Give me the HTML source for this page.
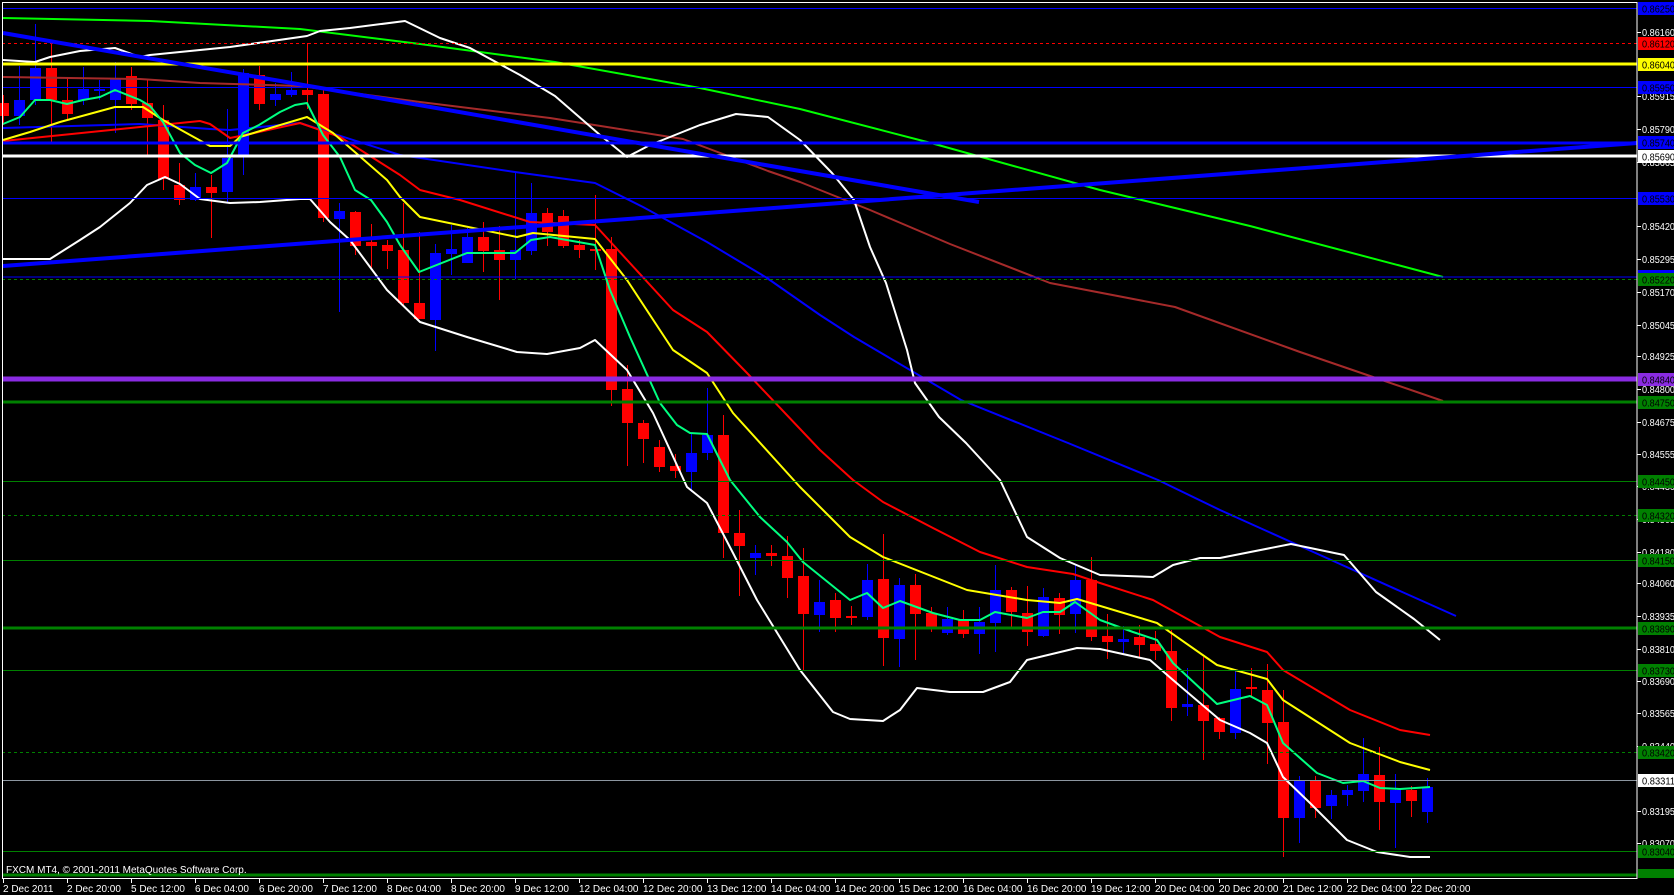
<!DOCTYPE html>
<html><head><meta charset="utf-8">
<style>
html,body{margin:0;padding:0;background:#000;width:1674px;height:895px;overflow:hidden}
svg{display:block}
text{font-family:"Liberation Sans",sans-serif;font-size:10px}
.p text{font-size:10px}
</style></head>
<body>
<svg id="c" width="1674" height="895" viewBox="0 0 1674 895" xmlns="http://www.w3.org/2000/svg">
<rect width="1674" height="895" fill="#000"/>
<g id="candles"></g>
<g fill="none" stroke-linejoin="round">
<polyline stroke="#00ff00" stroke-width="2" points="3,18 150,21 300,29 420,44 555,62 700,88 800,109 931,143 1100,190 1250,226 1443,277"/>
<polyline stroke="#a52a2a" stroke-width="2" points="3,77 140,79 200,83 300,86 420,102 550,118 683,139 768,171 800,182 870,210 950,244 1050,283 1175,307 1300,352 1373,377 1443,401"/>
<polyline stroke="#0000ff" stroke-width="2" points="3,128 140,124 210,129 230,130 300,123 400,155 515,172 595,183 643,207 707,242 767,278 820,315 854,337 961,400 1068,443 1158,480 1220,510 1320,555 1400,591 1456,616"/>
<polyline stroke="#ff0000" stroke-width="2" points="3,141 140,127 200,121 210,124 230,138 250,134 300,123 340,137 400,175 420,190 460,200 530,222 595,225 673,310 707,332 747,373 820,450 853,480 883,502 933,528 980,552 1027,567 1073,574 1100,583 1153,600 1220,637 1267,652 1283,670 1350,710 1400,730 1430,735"/>
<polyline stroke="#ffff00" stroke-width="2" points="3,140 30,132 60,122 115,107 143,107 163,120 210,146 230,146 240,137 307,117 333,133 387,180 400,197 420,217 517,237 533,233 595,239 627,280 673,350 707,373 733,413 800,487 850,537 883,557 967,590 1027,600 1060,603 1077,599 1157,623 1217,665 1267,679 1283,700 1350,743 1400,762 1430,770"/>
<polyline stroke="#00ff80" stroke-width="2" points="3,124 20,117 35,100 50,100 67,104 83,100 100,97 115,90 140,100 150,106 163,122 180,153 195,165 211,173 227,163 243,133 259,125 280,112 295,105 307,103 323,135 340,157 355,190 371,200 387,222 400,245 419,272 467,253 515,253 531,240 550,237 595,245 610,290 630,337 660,403 677,425 690,433 707,434 730,480 760,517 787,542 803,562 850,600 867,593 883,608 900,601 933,613 960,620 980,620 995,612 1027,618 1043,612 1060,612 1075,602 1100,620 1133,632 1157,640 1173,663 1217,704 1250,696 1267,705 1283,743 1317,773 1343,783 1363,781 1380,788 1400,789 1430,787"/>
<polyline stroke="#ffffff" stroke-width="2" points="3,60 35,62 50,57 80,51 115,48 140,57 150,55 180,52 230,47 307,36 320,31 350,28 405,21 440,38 470,48 520,75 555,96 600,135 627,157 650,145 680,133 700,125 736,114 768,117 800,140 832,173 854,200 870,247 886,283 907,350 915,383 939,417 966,443 1000,480 1027,537 1060,558 1100,575 1153,577 1173,565 1200,558 1220,558 1291,544 1344,555 1376,592 1414,619 1440,640"/>
<polyline stroke="#ffffff" stroke-width="2" points="3,259 50,259 80,240 100,227 130,203 147,185 165,177 180,184 200,199 230,203 260,202 300,199 310,199 330,222 350,240 387,290 420,322 467,337 517,352 547,354 580,348 595,340 627,370 653,413 687,487 707,503 733,553 757,600 800,670 833,712 850,719 883,721 900,710 917,688 950,692 983,692 1010,682 1027,660 1077,648 1100,649 1150,660 1173,680 1220,720 1250,733 1267,743 1283,777 1310,803 1347,840 1377,852 1410,857 1430,857"/>
</g>
<g>
<line x1="2" x2="1637" y1="8.5" y2="8.5" stroke="#0000ff" stroke-width="1"/>
<line x1="2" x2="1637" y1="43.5" y2="43.5" stroke="#ff0000" stroke-width="1" stroke-dasharray="3,3"/>
<line x1="2" x2="1637" y1="64" y2="64" stroke="#ffff00" stroke-width="3"/>
<line x1="2" x2="1637" y1="87.5" y2="87.5" stroke="#0000ff" stroke-width="1"/>
<line x1="2" x2="1637" y1="143" y2="143" stroke="#0000ff" stroke-width="3"/>
<line x1="2" x2="1637" y1="156" y2="156" stroke="#ffffff" stroke-width="3"/>
<line x1="2" x2="1637" y1="198.5" y2="198.5" stroke="#0000ff" stroke-width="1"/>
<line x1="2" x2="1637" y1="277" y2="277" stroke="#0000ff" stroke-width="1"/>
<line x1="2" x2="1637" y1="279.5" y2="279.5" stroke="#008000" stroke-width="1" stroke-dasharray="3,3"/>
<line x1="2" x2="1637" y1="379" y2="379" stroke="#8a2be2" stroke-width="5"/>
<line x1="2" x2="1637" y1="402" y2="402" stroke="#008000" stroke-width="3"/>
<line x1="2" x2="1637" y1="481.5" y2="481.5" stroke="#008000" stroke-width="1"/>
<line x1="2" x2="1637" y1="515.5" y2="515.5" stroke="#008000" stroke-width="1" stroke-dasharray="3,3"/>
<line x1="2" x2="1637" y1="560.5" y2="560.5" stroke="#008000" stroke-width="1"/>
<line x1="2" x2="1637" y1="628" y2="628" stroke="#008000" stroke-width="3"/>
<line x1="2" x2="1637" y1="670.5" y2="670.5" stroke="#008000" stroke-width="1"/>
<line x1="2" x2="1637" y1="752.5" y2="752.5" stroke="#008000" stroke-width="1" stroke-dasharray="3,3"/>
<line x1="2" x2="1637" y1="780.5" y2="780.5" stroke="#8c96a0" stroke-width="1"/>
<line x1="2" x2="1637" y1="851.5" y2="851.5" stroke="#008000" stroke-width="1"/>
<line x1="2" x2="1637" y1="875" y2="875" stroke="#008000" stroke-width="3"/>
<line x1="3" y1="33" x2="979" y2="202" stroke="#0000ff" stroke-width="4"/>
<line x1="3" y1="266" x2="1637" y2="143" stroke="#0000ff" stroke-width="4"/>
</g>
<rect x="2.5" y="2.5" width="1634.5" height="876" fill="none" stroke="#ffffff" stroke-width="1"/>
<text x="6" y="873" fill="#ffffff" font-size="9.5">FXCM MT4, © 2001-2011 MetaQuotes Software Corp.</text>
<g fill="#ffffff" class="p">
<text x="1642" y="36" textLength="33" lengthAdjust="spacingAndGlyphs">0.86160</text>
<text x="1642" y="100" textLength="33" lengthAdjust="spacingAndGlyphs">0.85915</text>
<text x="1642" y="133" textLength="33" lengthAdjust="spacingAndGlyphs">0.85790</text>
<text x="1642" y="166" textLength="33" lengthAdjust="spacingAndGlyphs">0.85665</text>
<text x="1642" y="230" textLength="33" lengthAdjust="spacingAndGlyphs">0.85420</text>
<text x="1642" y="263" textLength="33" lengthAdjust="spacingAndGlyphs">0.85295</text>
<text x="1642" y="296" textLength="33" lengthAdjust="spacingAndGlyphs">0.85170</text>
<text x="1642" y="329" textLength="33" lengthAdjust="spacingAndGlyphs">0.85045</text>
<text x="1642" y="360" textLength="33" lengthAdjust="spacingAndGlyphs">0.84925</text>
<text x="1642" y="393" textLength="33" lengthAdjust="spacingAndGlyphs">0.84800</text>
<text x="1642" y="426" textLength="33" lengthAdjust="spacingAndGlyphs">0.84675</text>
<text x="1642" y="458" textLength="33" lengthAdjust="spacingAndGlyphs">0.84555</text>
<text x="1642" y="490" textLength="33" lengthAdjust="spacingAndGlyphs">0.84430</text>
<text x="1642" y="523" textLength="33" lengthAdjust="spacingAndGlyphs">0.84305</text>
<text x="1642" y="556" textLength="33" lengthAdjust="spacingAndGlyphs">0.84180</text>
<text x="1642" y="587" textLength="33" lengthAdjust="spacingAndGlyphs">0.84060</text>
<text x="1642" y="620" textLength="33" lengthAdjust="spacingAndGlyphs">0.83935</text>
<text x="1642" y="653" textLength="33" lengthAdjust="spacingAndGlyphs">0.83810</text>
<text x="1642" y="685" textLength="33" lengthAdjust="spacingAndGlyphs">0.83690</text>
<text x="1642" y="717" textLength="33" lengthAdjust="spacingAndGlyphs">0.83565</text>
<text x="1642" y="750" textLength="33" lengthAdjust="spacingAndGlyphs">0.83440</text>
<text x="1642" y="815" textLength="33" lengthAdjust="spacingAndGlyphs">0.83195</text>
<text x="1642" y="847" textLength="33" lengthAdjust="spacingAndGlyphs">0.83070</text>
</g>
<g id="ticks" stroke="#ffffff"></g>
<g class="p">
<rect x="1638" y="2" width="36" height="13" fill="#0000ff"/><text x="1642" y="12.5" fill="#000" textLength="33" lengthAdjust="spacingAndGlyphs">0.86250</text>
<rect x="1638" y="37" width="36" height="13" fill="#ff0000"/><text x="1642" y="47.5" fill="#000" textLength="33" lengthAdjust="spacingAndGlyphs">0.86120</text>
<rect x="1638" y="58" width="36" height="13" fill="#ffff00"/><text x="1642" y="68.5" fill="#000" textLength="33" lengthAdjust="spacingAndGlyphs">0.86040</text>
<rect x="1638" y="81" width="36" height="13" fill="#0000ff"/><text x="1642" y="91.5" fill="#000" textLength="33" lengthAdjust="spacingAndGlyphs">0.85950</text>
<rect x="1638" y="136" width="36" height="13" fill="#0000ff"/><text x="1642" y="146.5" fill="#000" textLength="33" lengthAdjust="spacingAndGlyphs">0.85740</text>
<rect x="1638" y="150" width="36" height="13" fill="#ffffff"/><text x="1642" y="160.5" fill="#000" textLength="33" lengthAdjust="spacingAndGlyphs">0.85690</text>
<rect x="1638" y="192" width="36" height="13" fill="#0000ff"/><text x="1642" y="202.5" fill="#000" textLength="33" lengthAdjust="spacingAndGlyphs">0.85530</text>
<rect x="1638" y="270" width="36" height="13" fill="#0000ff"/>
<rect x="1638" y="273" width="36" height="13" fill="#008000"/><text x="1642" y="283.5" fill="#000" textLength="33" lengthAdjust="spacingAndGlyphs">0.85220</text>
<rect x="1638" y="373" width="36" height="13" fill="#8a2be2"/><text x="1642" y="383.5" fill="#000" textLength="33" lengthAdjust="spacingAndGlyphs">0.84840</text>
<rect x="1638" y="396" width="36" height="13" fill="#008000"/><text x="1642" y="406.5" fill="#000" textLength="33" lengthAdjust="spacingAndGlyphs">0.84750</text>
<rect x="1638" y="475" width="36" height="13" fill="#008000"/><text x="1642" y="485.5" fill="#000" textLength="33" lengthAdjust="spacingAndGlyphs">0.84450</text>
<rect x="1638" y="509" width="36" height="13" fill="#008000"/><text x="1642" y="519.5" fill="#000" textLength="33" lengthAdjust="spacingAndGlyphs">0.84320</text>
<rect x="1638" y="554" width="36" height="13" fill="#008000"/><text x="1642" y="564.5" fill="#000" textLength="33" lengthAdjust="spacingAndGlyphs">0.84150</text>
<rect x="1638" y="622" width="36" height="13" fill="#008000"/><text x="1642" y="632.5" fill="#000" textLength="33" lengthAdjust="spacingAndGlyphs">0.83890</text>
<rect x="1638" y="664" width="36" height="13" fill="#008000"/><text x="1642" y="674.5" fill="#000" textLength="33" lengthAdjust="spacingAndGlyphs">0.83730</text>
<rect x="1638" y="746" width="36" height="13" fill="#008000"/><text x="1642" y="756.5" fill="#000" textLength="33" lengthAdjust="spacingAndGlyphs">0.83420</text>
<rect x="1638" y="774" width="36" height="13" fill="#ffffff"/><text x="1642" y="784.5" fill="#000" textLength="33" lengthAdjust="spacingAndGlyphs">0.83311</text>
<rect x="1638" y="845" width="36" height="13" fill="#008000"/><text x="1642" y="855.5" fill="#000" textLength="33" lengthAdjust="spacingAndGlyphs">0.83040</text>
<rect x="1638" y="869" width="36" height="9" fill="#008000"/>
</g>
<g fill="#ffffff" font-size="10">
<text x="3" y="892">2 Dec 2011</text>
<text x="67" y="892">2 Dec 20:00</text>
<text x="131" y="892">5 Dec 12:00</text>
<text x="195" y="892">6 Dec 04:00</text>
<text x="259" y="892">6 Dec 20:00</text>
<text x="323" y="892">7 Dec 12:00</text>
<text x="387" y="892">8 Dec 04:00</text>
<text x="451" y="892">8 Dec 20:00</text>
<text x="515" y="892">9 Dec 12:00</text>
<text x="579" y="892">12 Dec 04:00</text>
<text x="643" y="892">12 Dec 20:00</text>
<text x="707" y="892">13 Dec 12:00</text>
<text x="771" y="892">14 Dec 04:00</text>
<text x="835" y="892">14 Dec 20:00</text>
<text x="899" y="892">15 Dec 12:00</text>
<text x="963" y="892">16 Dec 04:00</text>
<text x="1027" y="892">16 Dec 20:00</text>
<text x="1091" y="892">19 Dec 12:00</text>
<text x="1155" y="892">20 Dec 04:00</text>
<text x="1219" y="892">20 Dec 20:00</text>
<text x="1283" y="892">21 Dec 12:00</text>
<text x="1347" y="892">22 Dec 04:00</text>
<text x="1411" y="892">22 Dec 20:00</text>
</g>
<g id="tticks" stroke="#ffffff"></g>
</svg>
<script>
var NS="http://www.w3.org/2000/svg";
var d=[
["r",103,116,95,125],["b",100,116,66,125],["b",68,100,24,105],["r",68,100,43,142],["r",100,114,78,120],
["b",89,100,67,105],["b",89,91,80,100],["b",79,100,62,133],["r",76,104,67,110],["r",103,118,80,155],
["r",120,179,105,190],["r",185,200,163,205],["b",187,200,173,201],["r",187,193,175,238],["b",158,192,109,202],
["b",73,155,69,175],["r",75,104,66,110],["b",94,100,83,106],["b",90,95,72,97],["r",90,95,43,109],
["r",94,218,88,222],["b",211,219,203,312],["r",212,246,211,255],["r",242,246,224,269],["r",245,251,240,269],
["r",250,303,203,305],["r",303,319,232,319],["b",253,320,244,351],["b",249,254,225,275],["b",237,263,228,263],
["r",237,251,222,272],["r",250,260,226,300],["b",250,260,172,279],["b",213,251,183,255],["r",213,232,208,246],
["r",216,246,210,248],["r",245,250,240,258],["r",249,250,195,270],["r",249,390,237,406],["r",389,423,365,466],
["r",423,439,420,463],["r",447,467,440,472],["r",466,471,454,478],["b",453,472,433,492],["b",435,453,388,460],
["r",435,533,415,558],["r",533,546,510,596],["b",553,558,545,575],["r",553,556,545,566],["r",556,578,536,598],
["r",576,614,548,670],["b",602,615,580,632],["r",600,618,593,632],["r",616,617,606,625],["b",580,617,564,620],
["r",579,638,534,666],["b",585,639,578,667],["r",585,614,574,660],["r",613,627,607,632],["b",619,633,607,635],
["r",619,634,610,638],["b",622,634,607,654],["b",590,623,565,652],["r",590,612,587,627],["r",613,632,586,646],
["b",597,636,588,637],["r",598,615,593,634],["b",580,614,565,633],["r",580,637,557,641],["r",636,642,614,659],
["b",639,642,626,653],["r",637,645,625,657],["r",644,651,631,660],["r",651,708,630,721],["b",704,707,668,716],
["r",705,721,657,760],["r",718,732,717,739],["b",689,733,669,739],["r",687,689,668,697],["r",690,723,664,764],
["r",722,818,690,857],["b",781,818,776,843],["r",781,808,776,818],["b",795,806,790,819],["b",790,795,785,806],
["b",774,791,738,802],["r",775,802,747,830],["b",790,803,774,848],["r",790,801,786,817],["b",787,812,778,823]];
var g=document.getElementById("candles");
d.forEach(function(c,i){
 var x=3+16*i,col=c[0]=="r"?"#ff0000":"#0000ff";
 var l=document.createElementNS(NS,"line");
 l.setAttribute("x1",x+0.5);l.setAttribute("x2",x+0.5);l.setAttribute("y1",c[3]);l.setAttribute("y2",c[4]);
 l.setAttribute("stroke",col);l.setAttribute("stroke-width","1");g.appendChild(l);
 var r=document.createElementNS(NS,"rect");
 r.setAttribute("x",x-5);r.setAttribute("y",c[1]);r.setAttribute("width",11);r.setAttribute("height",Math.max(2,c[2]-c[1]));
 r.setAttribute("fill",col);g.appendChild(r);
});
var tk=document.getElementById("ticks");
[32,96,129,162,226,259,292,325,356,389,422,454,486,519,552,583,616,649,681,713,746,811,843].forEach(function(y){
 var l=document.createElementNS(NS,"line");l.setAttribute("x1",1637);l.setAttribute("x2",1641);
 l.setAttribute("y1",y+0.5);l.setAttribute("y2",y+0.5);tk.appendChild(l);});
var tt=document.getElementById("tticks");
for(var k=0;k<23;k++){var x=3+64*k+0.5;var l=document.createElementNS(NS,"line");
 l.setAttribute("x1",x);l.setAttribute("x2",x);l.setAttribute("y1",879);l.setAttribute("y2",883);tt.appendChild(l);}
</script>
</body></html>
